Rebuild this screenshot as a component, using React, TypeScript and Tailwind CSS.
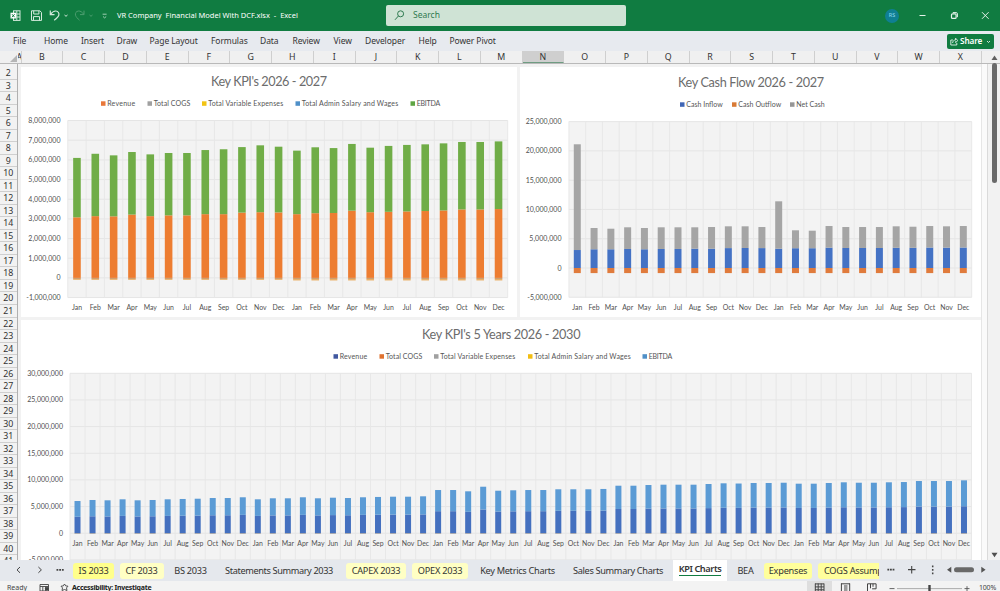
import clsx from "clsx";

const MONTHS = ["Jan", "Feb", "Mar", "Apr", "May", "Jun", "Jul", "Aug", "Sep", "Oct", "Nov", "Dec"];
const COLUMNS = "BCDEFGHIJKLMNOPQRSTUVWX".split("");

const MENU = [
  { label: "File", width: "w-[31px]" },
  { label: "Home", width: "w-[37px]" },
  { label: "Insert", width: "w-[35.5px]" },
  { label: "Draw", width: "w-[33px]" },
  { label: "Page Layout", width: "w-[61.5px]" },
  { label: "Formulas", width: "w-[49px]" },
  { label: "Data", width: "w-[32.5px]" },
  { label: "Review", width: "w-[41px]" },
  { label: "View", width: "w-[31.5px]" },
  { label: "Developer", width: "w-[53.5px]" },
  { label: "Help", width: "w-[31px]" },
  { label: "Power Pivot", width: "w-[60px]" },
];

const SHEETS = [
  { label: "IS 2033", style: "w-[41px] bg-[#ffff8c]" },
  { label: "CF 2033", style: "ml-[5.5px] w-[44px] bg-[#ffffc4]" },
  { label: "BS 2033", style: "ml-[4.5px] w-[45px]" },
  { label: "Statements Summary 2033", style: "ml-[0px] w-[132px] tracking-[-0.38px]" },
  { label: "CAPEX 2033", style: "ml-[1px] w-[60px] bg-[#ffffc4]" },
  { label: "OPEX 2033", style: "ml-[6px] w-[56px] bg-[#ffffc4]" },
  { label: "Key Metrics Charts", style: "ml-[5.5px] w-[88px] tracking-[-0.3px]" },
  { label: "Sales Summary Charts", style: "ml-[1.5px] w-[110px] tracking-[-0.33px]" },
];

const KPI_TOTAL = [
  6.1, 6.31, 6.23, 6.4, 6.28, 6.35, 6.35, 6.5, 6.54, 6.65, 6.74, 6.67,
  6.47, 6.64, 6.6, 6.81, 6.62, 6.71, 6.76, 6.79, 6.84, 6.91, 6.91, 6.94,
];
const KPI_REVENUE = [
  3.08, 3.14, 3.13, 3.22, 3.14, 3.18, 3.18, 3.24, 3.24, 3.32, 3.34, 3.33,
  3.24, 3.29, 3.3, 3.42, 3.34, 3.36, 3.38, 3.4, 3.43, 3.48, 3.48, 3.5,
];
const CASH_TOTAL = [
  21.13, 6.83, 6.71, 6.95, 6.83, 6.95, 6.95, 6.95, 7.0, 7.12, 7.12, 7.0,
  11.39, 6.44, 6.37, 7.17, 7.0, 7.0, 7.0, 7.12, 7.05, 7.17, 7.12, 7.17,
];
const CASH_INFLOW = [
  3.07, 3.2, 3.2, 3.25, 3.2, 3.25, 3.25, 3.3, 3.3, 3.4, 3.42, 3.4,
  3.3, 3.38, 3.38, 3.48, 3.42, 3.42, 3.42, 3.45, 3.45, 3.5, 3.48, 3.5,
];
const YEARS_TOTAL = [
  6.04, 6.23, 6.17, 6.36, 6.17, 6.23, 6.36, 6.42, 6.47, 6.6, 6.6, 6.74,
  6.36, 6.55, 6.55, 6.74, 6.55, 6.66, 6.6, 6.74, 6.8, 6.85, 6.85, 6.92,
  8.1, 8.1, 7.86, 8.72, 7.97, 8.05, 8.1, 8.1, 8.24, 8.24, 8.24, 8.3,
  8.91, 8.91, 9.04, 9.1, 9.1, 9.1, 9.23, 9.36, 9.32, 9.42, 9.42, 9.47,
  9.29, 9.29, 9.42, 9.55, 9.47, 9.47, 9.55, 9.6, 9.79, 9.79, 9.79, 9.92,
];

type Part = { from: number; to: number; color: string };
type LegendItem = { label: string; x: number; width: number; color: string };

type ChartProps = {
  view: [number, number, number, number];
  title: string;
  titleX: number;
  titleY: number;
  titleWidth: number;
  legend: LegendItem[];
  legendY: number;
  plot: { left: number; right: number; top: number; bottom: number };
  zeroY: number;
  unit: number; // pixels per million
  max: number;
  min: number;
  step: number;
  labelRight: number;
  monthY: number;
  barWidth: number;
  bars: Part[][];
};

const formatTick = (million: number) => (million === 0 ? "0" : `${million},000,000`);

// the minus sign is narrower than a digit
const tickWidth = (million: number) =>
  million === 0 ? undefined : formatTick(Math.abs(million)).length * 3.58 + (million < 0 ? 2 : 0);

const Chart = (props: ChartProps) => {
  const { view, plot, zeroY, unit, bars, barWidth } = props;
  const pitch = (plot.right - plot.left) / bars.length;
  const ticks: number[] = [];
  for (let t = props.max; t >= props.min; t -= props.step) ticks.push(t);
  const y = (value: number) => zeroY - value * unit;

  return (
    <svg
      width={view[2]}
      height={view[3]}
      viewBox={view.join(" ")}
      className="shrink-0 bg-white font-[Lato,sans-serif]"
    >
      <text x={props.titleX} y={props.titleY} fontSize="12.7" textLength={props.titleWidth} fill="#6c6c6c">
        {props.title}
      </text>

      {/* legend */}
      {props.legend.map((item) => (
        <g key={item.label}>
          <rect x={item.x} y={props.legendY - 2.3} width="4.5" height="4.5" fill={item.color} />
          <text x={item.x + 6.2} y={props.legendY + 2.5} fontSize="7" textLength={item.width} fill="#555">
            {item.label}
          </text>
        </g>
      ))}

      {/* plot area */}
      <rect
        x={plot.left}
        y={plot.top}
        width={plot.right - plot.left}
        height={plot.bottom - plot.top}
        fill="#f3f3f3"
      />
      {ticks.map((t) => (
        <line key={t} x1={plot.left} x2={plot.right} y1={y(t)} y2={y(t)} stroke="#e5e5e5" strokeWidth="1" />
      ))}
      {Array.from({ length: bars.length + 1 }, (_, i) => (
        <line
          key={i}
          x1={plot.left + i * pitch}
          x2={plot.left + i * pitch}
          y1={plot.top}
          y2={plot.bottom}
          stroke="#e7e7e7"
          strokeWidth="0.9"
        />
      ))}

      {/* value axis */}
      {ticks.map((t) => (
        <text
          key={t}
          x={props.labelRight}
          y={y(t) + 2.5}
          fontSize="7"
          textAnchor="end"
          textLength={tickWidth(t)}
          fill="#505050"
        >
          {formatTick(t)}
        </text>
      ))}

      {/* bars */}
      {bars.map((parts, i) => {
        const center = plot.left + (i + 0.5) * pitch;
        return (
          <g key={i}>
            {parts.map((part, j) => (
              <rect
                key={j}
                x={center - barWidth / 2}
                y={y(part.to)}
                width={barWidth}
                height={(part.to - part.from) * unit}
                fill={part.color}
              />
            ))}
            <text x={center} y={props.monthY} fontSize="6.9" textAnchor="middle" fill="#505050">
              {MONTHS[i % 12]}
            </text>
          </g>
        );
      })}
    </svg>
  );
};

const TitleBar = () => (
  <header className="flex h-[31px] shrink-0 items-center bg-[#107c41] text-white">
    <svg width="112" height="31" viewBox="0 0 112 31" fill="none" stroke="#d5eadd" strokeWidth="1">
      <rect x="13.5" y="10.8" width="6.5" height="9.6" />
      <path d="M16.5 14h3.5M16.5 17h3.5M16.8 10.8v9.6" />
      <rect x="10.5" y="12.7" width="5.6" height="5.8" fill="#fff" stroke="none" />
      <path d="M12 14.2l2.6 3M14.6 14.2l-2.6 3" stroke="#107c41" />
      <path d="M31.5 10.8h8.3l1.7 1.6v8h-10zM33.7 10.8v3.2h5.2v-3.2M33.5 20.4v-3.8h6v3.8" />
      <path d="M50.3 10.6v4h4.2M50.5 14.3c1.6-2.2 3.4-3.4 5.3-3.3 2.4.2 3.6 2.3 3 4.2-.5 1.7-2.7 3.5-4.6 5" strokeWidth="1.2" />
      <path d="M64.5 15l1.5 1.3 1.5-1.3" />
      <g stroke="#4c9d6f">
        <path d="M84 10.6v4h-4M83.8 14.3c-1.6-2.2-3.4-3.4-5.3-3.3-2.4.2-3.6 2.3-3 4.2.5 1.7 2.2 3.5 4 5" />
        <path d="M89.5 15l1.5 1.3 1.5-1.3" />
      </g>
      <path d="M102.6 14.2h4M103 16.5l1.6 1.4 1.6-1.4" stroke="#9fcfb3" />
    </svg>
    <p className="ml-[5px] w-[269px] whitespace-pre pt-px text-[7.5px]">
      {"VR Company  Financial Model With DCF.xlsx  -  Excel"}
    </p>
    <div className="flex h-[21px] w-[239.5px] items-center rounded-[2px] bg-[#cfe3d5] text-[#2f7a50]">
      <svg width="27" height="21" viewBox="0 0 27 21" fill="none" stroke="currentColor" strokeWidth="1">
        <circle cx="14.6" cy="8.8" r="3" />
        <path d="M12.4 11l-3.4 3.8" />
      </svg>
      <span className="text-[8.5px]">Search</span>
    </div>
    <div className="ml-auto mr-[25px] flex size-[14px] items-center justify-center rounded-full bg-[#0f7f93] text-[5.5px] text-[#8fdcf2]">
      RS
    </div>
    <svg width="76" height="31" viewBox="924 0 76 31" fill="none" stroke="#e6f3eb" strokeWidth="1" className="overflow-visible">
      <path d="M919.5 15.5h6" />
      <rect x="951.5" y="13.8" width="4.6" height="4.6" rx="1" strokeWidth="1.2" />
      <path d="M952.8 12.6h3.4q1.2 0 1.2 1.2v3.4" />
      <path d="M982 12.2l6.6 6.6M988.6 12.2l-6.6 6.6" />
    </svg>
  </header>
);

const MenuBar = () => (
  <nav className="flex h-[20px] shrink-0 items-center bg-[#e7eaef] pl-[13px] pt-px text-[8.5px] text-[#333]">
    {MENU.map((item) => (
      <span key={item.label} className={clsx("shrink-0 whitespace-nowrap tracking-[-0.08px]", item.width)}>
        {item.label}
      </span>
    ))}
    <button className="ml-auto mr-[6.5px] flex h-[15px] w-[47px] items-center rounded-[2px] bg-[#107c41] pl-[3px] text-[8.2px] font-semibold text-white">
      <svg width="8" height="9" viewBox="0 0 8 9" fill="none" stroke="currentColor" strokeWidth="0.8">
        <path d="M3 3H.8v5h6V6M2.6 6c.2-2 1.2-3 3-3V1.2L7.8 3.6 5.6 5.6V4.3" />
      </svg>
      <span className="ml-[2.5px] tracking-[-0.1px]">Share</span>
      <svg width="5" height="4" viewBox="0 0 5 4" fill="none" stroke="currentColor" strokeWidth="0.8" className="ml-[4px]">
        <path d="M1 1l1.5 1.5L4 1" />
      </svg>
    </button>
  </nav>
);

const ColumnHeader = () => (
  <div className="flex h-[13px] shrink-0 border-b border-[#b9b9b9] bg-[#f0f0f0] text-[8.8px] leading-[13px] text-[#333]">
    <div className="flex w-[17.5px] shrink-0 items-end justify-end pr-px">
      <svg width="8" height="9" viewBox="0 0 8 9">
        <path d="M8 1v7H1z" fill="#b5b5b5" />
      </svg>
    </div>
    <div className="w-[4px] shrink-0 overflow-hidden border-r border-[#cfcfcf]">
      <span className="-ml-[1px]">A</span>
    </div>
    {COLUMNS.map((name) => (
      <div
        key={name}
        className={clsx(
          "w-[41.75px] shrink-0 border-r border-[#cfcfcf] text-center",
          name === "N" && "border-b border-b-[#6f9c82] bg-[#cfcfcf]",
        )}
      >
        {name}
      </div>
    ))}
  </div>
);

const RowHeader = () => (
  <div className="w-[17.5px] shrink-0 overflow-hidden border-r border-[#b0b0b0] bg-[#f2f2f2] pt-[3.2px]">
    {Array.from({ length: 40 }, (_, i) => (
      <div
        key={i}
        className="h-[12.53px] border-b border-[#cfcfcf] text-center text-[8.8px] leading-[12.5px] text-[#333]"
      >
        {i + 2}
      </div>
    ))}
  </div>
);

const Charts = () => (
  <div className="flex w-[964.5px] shrink-0 flex-col overflow-hidden border-r border-[#e6e6e6] bg-[#f2f2f2] pl-[3.5px] pt-[3px]">
    <div className="flex gap-[3px]">
      <Chart
        view={[21, 67, 496, 250]}
        title="Key KPI's 2026 - 2027"
        titleX={211}
        titleY={86.4}
        titleWidth={116}
        legend={[
          { label: "Revenue", x: 101, width: 28, color: "#e8773a" },
          { label: "Total COGS", x: 147.5, width: 36.5, color: "#a0a0a0" },
          { label: "Total Variable Expenses", x: 202, width: 75, color: "#f2c313" },
          { label: "Total Admin Salary and Wages", x: 295.5, width: 96.5, color: "#4f90c8" },
          { label: "EBITDA", x: 410.5, width: 23.5, color: "#5fa544" },
        ]}
        legendY={103.6}
        plot={{ left: 67.8, right: 507.7, top: 120.5, bottom: 297.5 }}
        zeroY={277.9}
        unit={19.67}
        max={8}
        min={-1}
        step={1}
        labelRight={60.5}
        monthY={309.9}
        barWidth={7.6}
        bars={KPI_TOTAL.map((total, i) => [
          { from: -0.05, to: 0, color: "#c69361" },
          { from: i > 11 ? -0.13 : -0.1, to: -0.05, color: "#ebb067" },
          { from: 0, to: KPI_REVENUE[i], color: "#ed7d31" },
          { from: KPI_REVENUE[i], to: total, color: "#70ad47" },
        ])}
      />
      <Chart
        view={[520, 67, 461, 250]}
        title="Key Cash Flow 2026 - 2027"
        titleX={678}
        titleY={87.4}
        titleWidth={146}
        legend={[
          { label: "Cash Inflow", x: 680, width: 36.5, color: "#4066b5" },
          { label: "Cash Outflow", x: 732, width: 43, color: "#d97a35" },
          { label: "Net Cash", x: 790, width: 28.5, color: "#969696" },
        ]}
        legendY={104.6}
        plot={{ left: 568.9, right: 971.7, top: 121.6, bottom: 297.3 }}
        zeroY={268}
        unit={5.855}
        max={25}
        min={-5}
        step={5}
        labelRight={561.5}
        monthY={309.9}
        barWidth={7}
        bars={CASH_TOTAL.map((total, i) => [
          { from: -0.87, to: 0, color: "#e07b3c" },
          { from: 0, to: CASH_INFLOW[i], color: "#4472c4" },
          { from: CASH_INFLOW[i], to: total, color: "#a5a5a5" },
        ])}
      />
    </div>
    <div className="mt-[3px] flex">
      <Chart
        view={[21, 320, 960, 240]}
        title="Key KPI's 5 Years 2026 - 2030"
        titleX={422}
        titleY={339.4}
        titleWidth={158.5}
        legend={[
          { label: "Revenue", x: 333.5, width: 27.5, color: "#4058a0" },
          { label: "Total COGS", x: 379.5, width: 36.5, color: "#e0722f" },
          { label: "Total Variable Expenses", x: 434, width: 75, color: "#a0a0a0" },
          { label: "Total Admin Salary and Wages", x: 528, width: 96.5, color: "#f2bd13" },
          { label: "EBITDA", x: 642.5, width: 23.5, color: "#4f90c8" },
        ]}
        legendY={356.5}
        plot={{ left: 70, right: 971.5, top: 373.3, bottom: 561 }}
        zeroY={533.2}
        unit={5.33}
        max={30}
        min={-5}
        step={5}
        labelRight={63}
        monthY={545.8}
        barWidth={6}
        bars={YEARS_TOTAL.map((total) => [
          { from: -0.12, to: 0, color: "#b0a08c" },
          { from: 0, to: total * 0.51, color: "#4470bf" },
          { from: total * 0.51, to: total, color: "#5b9bd5" },
        ])}
      />
    </div>
  </div>
);

const ScrollBar = () => (
  <div className="flex flex-1 flex-col items-center border-l border-[#dadada] bg-[#f2f2f2]">
    <div className="mt-[-9px] h-[128px] w-[5px]">
      <svg width="7" height="6" viewBox="0 0 7 6" className="-ml-px">
        <path d="M3.5 0.5L6.5 5h-6z" fill="#606060" />
      </svg>
      <div className="mt-[2px] h-[120px] rounded-full bg-[#6a6a6a]" />
    </div>
    <svg width="7" height="6" viewBox="0 0 7 6" className="mb-[2px] mt-auto">
      <path d="M3.5 5.2L0.5 0.8h6z" fill="#505050" />
    </svg>
  </div>
);

const SheetTabs = () => (
  <div className="flex h-[21px] shrink-0 items-center bg-[#e5e8ed] text-[9.2px] tracking-[-0.25px] text-[#333]">
    <svg width="73" height="21" viewBox="0 0 73 21" fill="none" stroke="#444" strokeWidth="1" className="shrink-0">
      <path d="M20 7l-3 2.9 3 2.9M38.4 7l3 2.9-3 2.9" />
      <path d="M56.5 9.8h1.8M59.2 9.8H61M61.9 9.8h1.8" strokeWidth="1.7" />
    </svg>
    {SHEETS.map((sheet) => (
      <div
        key={sheet.label}
        className={clsx(
          "flex h-[16px] shrink-0 items-center justify-center whitespace-nowrap rounded-[3px]",
          sheet.style,
        )}
      >
        {sheet.label}
      </div>
    ))}
    <div className="flex h-full w-[54px] shrink-0 items-start justify-center bg-white pt-[2px]">
      <span className="h-[14px] whitespace-nowrap border-b border-[#107c41] font-semibold leading-[13px] tracking-[-0.4px]">
        KPI Charts
      </span>
    </div>
    <div className="w-[37px] shrink-0 text-center">BEA</div>
    <div className="flex h-[16px] w-[48px] shrink-0 items-center justify-center rounded-[3px] bg-[#ffff9c]">
      Expenses
    </div>
    <div className="ml-[6px] flex h-[16px] w-[61px] shrink-0 items-center overflow-hidden whitespace-nowrap rounded-l-[3px] bg-[#ffff9c] pl-[6px]">
      COGS Assumptions
    </div>
    <svg width="119" height="21" viewBox="881 0 119 21" fill="none" stroke="#444" className="ml-auto shrink-0">
      <path d="M887.4 9.6h1.8M890 9.6h1.8M892.6 9.6h1.8" strokeWidth="1.7" />
      <path d="M908 9.6h7.5M911.7 5.9v7.5" strokeWidth="1.1" />
      <path d="M932.7 5.6v1.6M932.7 9.1v1.6M932.7 12.6v1.6" strokeWidth="1.5" />
      <path d="M951.3 6.8v6l-4.3-3zM981.3 6.8v6l4.3-3z" fill="#555" stroke="none" />
      <rect x="954" y="7.3" width="20" height="5" rx="2.5" fill="#696969" stroke="none" />
    </svg>
  </div>
);

const StatusBar = () => (
  <footer className="flex h-[10px] shrink-0 items-start overflow-hidden bg-[#f3f3f3] text-[7px] leading-[14px] text-[#444]">
    <span className="ml-[7px] w-[32px]">Ready</span>
    <svg width="33" height="10" viewBox="39 0 33 10" fill="none" stroke="#444" strokeWidth="0.9">
      <path d="M40 3.5h8.5V10H40zM40 5.5h8.5M42.8 5.5V10M45.6 5.5V10" />
      <circle cx="46.8" cy="7.8" r="1.5" fill="#444" />
      <path d="M61 5.2l2.3-.3 1.2-1.9 1.2 1.9 2.3.3-1.5 1.7.5 2.6-2.5-1-2.5 1 .5-2.6z" />
    </svg>
    <span className="whitespace-nowrap font-bold tracking-[-0.29px] text-[#222]">Accessibility: Investigate</span>
    <svg width="168" height="10" viewBox="807 0 168 10" fill="none" stroke="#444" strokeWidth="1" className="ml-auto shrink-0">
      <rect x="807" y="0" width="25" height="10" fill="#dedede" stroke="none" />
      <path d="M815 2.9h9M815 5.9h9M815 8.8h9M815.3 2.5V10M818.2 2.5V10M821.2 2.5V10M824 2.5V10" />
      <path d="M841 2.8h9M841.4 2.5V10M849.7 2.5V10M844 5h3.5M844 7h3.5M844 9h3.5" />
      <path d="M867.5 10V2.8h8.6v5h-4M870.5 2.8v4.5M873 2.8v3" />
      <path d="M889.5 7.6h5M964.5 7.6h5M967 5.2V10" stroke="#555" strokeWidth="0.9" />
      <path d="M897 7.6h65" stroke="#999" strokeWidth="0.8" />
      <path d="M929.5 4v6" strokeWidth="2.4" />
    </svg>
    <span className="ml-[4px] w-[21px] tracking-[-0.2px]">100%</span>
  </footer>
);

const App = () => {
  return (
    <div className="flex h-[591px] w-[1000px] flex-col overflow-hidden bg-white font-['Noto_Sans','Open_Sans',sans-serif]">
      <TitleBar />
      <MenuBar />
      <ColumnHeader />
      <main className="flex h-[496px] shrink-0">
        <RowHeader />
        <Charts />
        <div className="w-[5px] shrink-0 bg-[#fafafa]" />
        <ScrollBar />
      </main>
      <SheetTabs />
      <StatusBar />
    </div>
  );
};

export default App;
